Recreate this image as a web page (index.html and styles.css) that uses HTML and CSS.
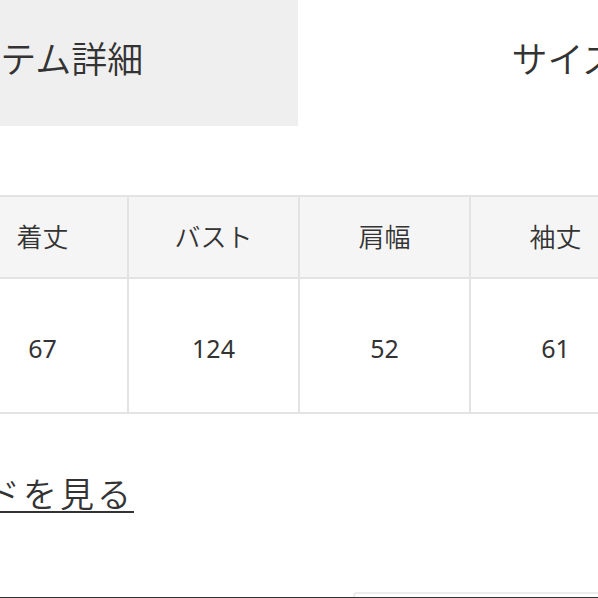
FILE: index.html
```html
<!DOCTYPE html>
<html lang="ja">
<head>
<meta charset="utf-8">
<link rel="stylesheet" href="styles.css">
</head>
<body>
<div class="page">
  <div class="tabs">
    <div class="tab active">アイテム詳細</div>
    <div class="tab">サイズ</div>
  </div>
  <table class="size-table">
    <tr>
      <th>着丈</th><th>バスト</th><th>肩幅</th><th>袖丈</th>
    </tr>
    <tr>
      <td>67</td><td>124</td><td>52</td><td>61</td>
    </tr>
  </table>
  <div class="guide-row"><a class="guide-link" href="#">サイズガイドを見る</a></div>
  <div class="footer">
    <div class="footer-box"></div>
  </div>
</div>
</body>
</html>
```
FILE: styles.css
```css
html, body {
  margin: 0;
  padding: 0;
  background: #ffffff;
}
body {
  width: 598px;
  height: 598px;
  overflow: hidden;
  font-family: "Noto Sans CJK JP", "Noto Sans", sans-serif;
  font-weight: 350;
  color: #333333;
}
.page {
  width: 598px;
  height: 598px;
  overflow: hidden;
  display: flex;
  flex-direction: column;
}
.tabs {
  display: flex;
  width: 1056px;
  margin-left: -230px;
  flex: 0 0 auto;
}
.tab {
  flex: 0 0 528px;
  height: 126px;
  box-sizing: border-box;
  display: flex;
  align-items: center;
  justify-content: center;
  padding-bottom: 12px;
  padding-left: 6px;
  font-size: 36px;
  line-height: 1;
  color: #333333;
}
.tab.active {
  background: #efefef;
}
.size-table {
  margin-top: 69px;
  margin-left: -44px;
  border-collapse: collapse;
  table-layout: fixed;
  width: 686px;
  flex: 0 0 auto;
}
.size-table th,
.size-table td {
  width: 169px;
  border: 2px solid #e3e3e3;
  text-align: center;
  font-size: 26px;
  font-weight: 350;
  color: #333333;
  padding: 0;
}
.size-table th {
  height: 77px;
  background: #f5f5f5;
  padding-bottom: 3px;
}
.size-table td {
  height: 129px;
  padding-top: 4px;
  font-family: "Noto Sans", "Noto Sans CJK JP", sans-serif;
  font-weight: 400;
  font-size: 25px;
}
.guide-row {
  margin-top: 58px;
  display: flex;
  justify-content: flex-end;
  width: 134px;
}
.guide-link {
  flex: 0 0 auto;
  font-size: 34px;
  line-height: 42px;
  letter-spacing: 3px;
  color: #333333;
  text-decoration: underline;
  text-underline-offset: 4px;
  text-decoration-thickness: 2px;
  white-space: nowrap;
}
.footer {
  margin-top: auto;
  height: 6px;
  border-bottom: 1px solid #333333;
  box-sizing: border-box;
  display: flex;
}
.footer-box {
  margin-left: 353px;
  flex: 1 1 auto;
  border-top: 2px solid #ececec;
  border-left: 2px solid #ececec;
  border-top-left-radius: 4px;
}
```
